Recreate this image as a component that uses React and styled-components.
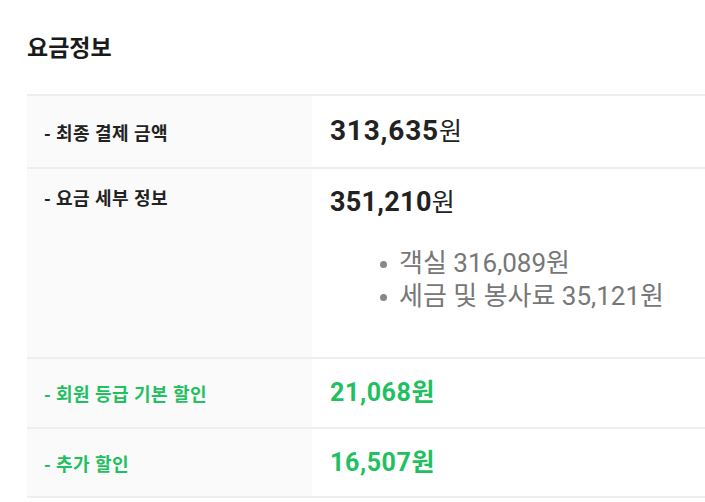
import React from "react";
import styled, { createGlobalStyle } from "styled-components";

const GlobalStyle = createGlobalStyle`
  html, body {
    margin: 0;
    padding: 0;
    background: #ffffff;
  }
  body {
    font-family: Roboto, "Noto Sans CJK KR", "Noto Sans", sans-serif;
    color: #222222;
  }
`;

const Page = styled.div`
  padding: 27px 0 0 27px;
  width: 705px;
  box-sizing: border-box;
`;

const Title = styled.h2`
  margin: 0 0 29px;
  font-family: "Noto Sans CJK KR", sans-serif;
  font-size: 23px;
  font-weight: 700;
  line-height: 38px;
  color: #1a1a1a;
`;

const Table = styled.div`
  display: grid;
  grid-template-columns: 285px 1fr;
  border-top: 2px solid #eeeeee;
`;

const Label = styled.div`
  background: #fafafa;
  border-bottom: 2px solid #eeeeee;
  padding: ${(p) => (p.$top ? "15px 0 0 17px" : "0 0 0 17px")};
  display: flex;
  align-items: ${(p) => (p.$top ? "flex-start" : "center")};
  height: ${(p) => p.$h}px;
  box-sizing: border-box;
  font-family: "Noto Sans CJK KR", sans-serif;
  font-size: 18px;
  letter-spacing: 0.6px;
  font-weight: 700;
  color: ${(p) => (p.$green ? "#1fc05f" : "#222222")};
`;

const Value = styled.div`
  border-bottom: 2px solid #eeeeee;
  padding: ${(p) => (p.$top ? "14px 0 0 18px" : "0 0 0 18px")};
  display: flex;
  flex-direction: column;
  justify-content: ${(p) => (p.$top ? "flex-start" : "center")};
  height: ${(p) => p.$h}px;
  box-sizing: border-box;
`;

const Amount = styled.div`
  line-height: 34px;
  color: ${(p) => (p.$green ? "#1fc05f" : "#222222")};

  b {
    font-family: Roboto, sans-serif;
    font-weight: 700;
    font-size: ${(p) => p.$size}px;
    letter-spacing: ${(p) => p.$ls}px;
  }
  span {
    font-family: "Noto Sans CJK KR", sans-serif;
    font-weight: ${(p) => (p.$green ? 700 : 400)};
    font-size: 25px;
  }
`;

const SubList = styled.ul`
  margin: 24px 0 0;
  padding: 0 0 0 50px;
  list-style: none;
`;

const SubItem = styled.li`
  position: relative;
  padding-left: 19px;
  font-size: 26px;
  line-height: 33px;
  color: #777777;
  font-family: Roboto, "Noto Sans CJK KR", sans-serif;

  &::before {
    content: "";
    position: absolute;
    left: 0;
    top: 14px;
    width: 7px;
    height: 7px;
    border-radius: 50%;
    background: #888888;
  }
`;

const rows = [
  { label: "- 최종 결제 금액", amount: "313,635", h: 73, size: 28, ls: 0.8 },
  {
    label: "- 요금 세부 정보",
    amount: "351,210",
    h: 190,
    top: true,
    size: 27,
    ls: 0.3,
    items: ["객실 316,089원", "세금 및 봉사료 35,121원"],
  },
  { label: "- 회원 등급 기본 할인", amount: "21,068", h: 70, green: true, size: 25, ls: 0.6 },
  { label: "- 추가 할인", amount: "16,507", h: 69, green: true, size: 25, ls: 0.6 },
];

export default function App() {
  return (
    <>
      <GlobalStyle />
      <Page>
        <Title>요금정보</Title>
        <Table>
          {rows.map((r) => (
            <React.Fragment key={r.label}>
              <Label $h={r.h} $top={r.top} $green={r.green}>
                {r.label}
              </Label>
              <Value $h={r.h} $top={r.top}>
                <Amount $green={r.green} $size={r.size} $ls={r.ls}>
                  <b>{r.amount}</b>
                  <span>원</span>
                </Amount>
                {r.items && (
                  <SubList>
                    {r.items.map((it) => (
                      <SubItem key={it}>{it}</SubItem>
                    ))}
                  </SubList>
                )}
              </Value>
            </React.Fragment>
          ))}
        </Table>
      </Page>
    </>
  );
}
